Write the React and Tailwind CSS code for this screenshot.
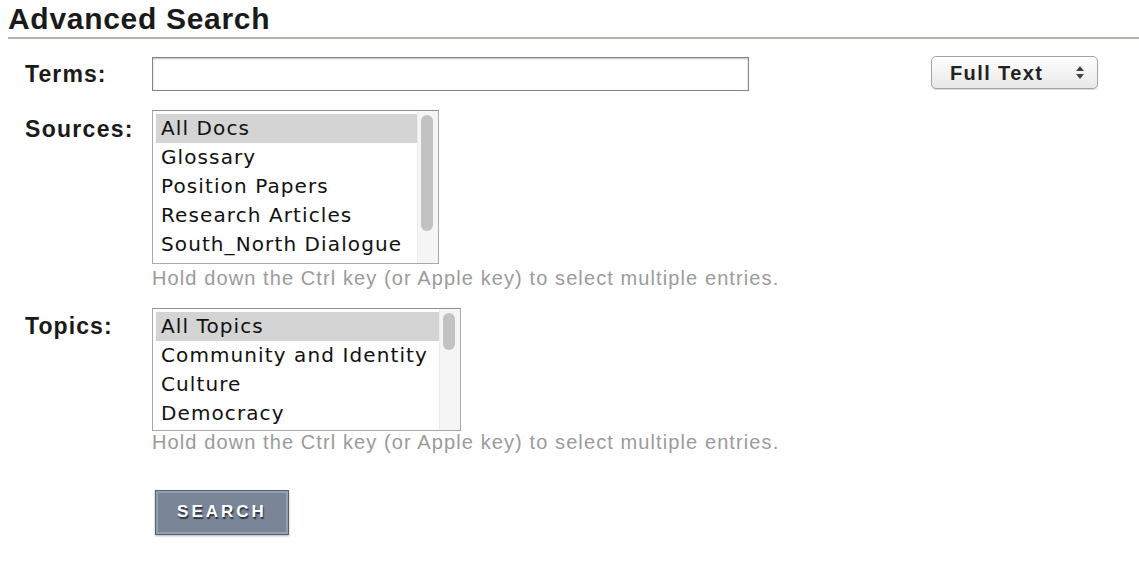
import React from "react";

const SANS = "font-['Liberation_Sans',Arial,sans-serif]";
const LIST = "font-['DejaVu_Sans',Verdana,sans-serif]";

function ListBox({ items, width, height, thumbHeight }) {
  return (
    <div
      className={`flex border border-[#a9a9a9] border-t-[#8f8f8f] bg-white ${LIST}`}
      style={{ width, height }}
    >
      <div className="flex-1 pt-[3px] pl-[3px] overflow-hidden">
        {items.map((it, i) => (
          <div
            key={it}
            className={`h-[29px] leading-[29px] pl-[5px] text-[20px] tracking-[1.1px] text-[#111] whitespace-nowrap ${
              i === 0 ? "bg-[#d4d4d4]" : ""
            }`}
          >
            {it}
          </div>
        ))}
      </div>
      <div className="w-[21px] bg-[#f5f5f5] border-l border-[#ececec] pt-[4px] pl-[3px]">
        <div
          className="w-[12px] rounded-full bg-[#c2c2c2]"
          style={{ height: thumbHeight }}
        />
      </div>
    </div>
  );
}

function Hint({ tight }) {
  return (
    <p
      className={`${SANS} text-[20px] tracking-[1.1px] text-[#9b9b9b] leading-[22px] whitespace-nowrap ${
        tight ? "mt-0" : "mt-[3px]"
      }`}
    >
      Hold down the Ctrl key (or Apple key) to select multiple entries.
    </p>
  );
}

export default function App() {
  return (
    <div className={`w-[1139px] h-[585px] bg-white ${SANS} text-[#1a1a1a]`}>
      <div className="pl-[8px]">
        <h1 className="text-[30px] font-bold leading-[34px] pt-[2px] tracking-[0.7px]">
          Advanced Search
        </h1>
        <div className="h-[2px] bg-[#b8b3a8] mt-[1px]" />
      </div>

      <div className="pl-[25px] pt-[18px]">
        {/* Terms */}
        <div className="flex items-center">
          <label className="w-[127px] text-[23px] tracking-[1.1px] font-bold">Terms:</label>
          <div className="w-[597px] h-[34px] border border-[#7d8593] shadow-[inset_0_1px_2px_rgba(0,0,0,0.25)] bg-white" />
          <div className="ml-auto mr-[41px] -mt-[3px] w-[167px] h-[33px] rounded-[5px] border border-[#a3a3a3] bg-gradient-to-b from-white to-[#e8e8e8] shadow-[0_1px_1px_rgba(0,0,0,0.15)] flex items-center pl-[18px] pr-[13px]">
            <span className="text-[20px] tracking-[1.4px] font-bold text-[#222]">Full Text</span>
            <svg className="ml-auto" width="8" height="13" viewBox="0 0 8 13">
              <path d="M4 0 L8 5 L0 5 Z" fill="#444" />
              <path d="M4 13 L8 8 L0 8 Z" fill="#444" />
            </svg>
          </div>
        </div>

        {/* Sources */}
        <div className="flex mt-[18px]">
          <label className="w-[127px] text-[23px] tracking-[1.3px] font-bold pt-[5px] leading-[28px]">Sources:</label>
          <div>
            <ListBox
              items={["All Docs", "Glossary", "Position Papers", "Research Articles", "South_North Dialogue"]}
              width={287}
              height={154}
              thumbHeight={116}
            />
            <Hint />
          </div>
        </div>

        {/* Topics */}
        <div className="flex mt-[19px]">
          <label className="w-[127px] text-[23px] tracking-[1.1px] font-bold pt-[4px] leading-[28px]">Topics:</label>
          <div>
            <ListBox
              items={["All Topics", "Community and Identity", "Culture", "Democracy"]}
              width={309}
              height={123}
              thumbHeight={37}
            />
            <Hint tight />
          </div>
        </div>

        <div className="pl-[130px] mt-[37px]">
          <button className="w-[134px] h-[45px] bg-[#7a8698] border border-[#56606f] shadow-[inset_0_0_0_2px_#95a0b0,0_1px_2px_rgba(0,0,0,0.3)] text-white font-bold text-[17px] tracking-[3px] [text-shadow:1px_2px_1px_#2d3440]">
            SEARCH
          </button>
        </div>
      </div>
    </div>
  );
}
